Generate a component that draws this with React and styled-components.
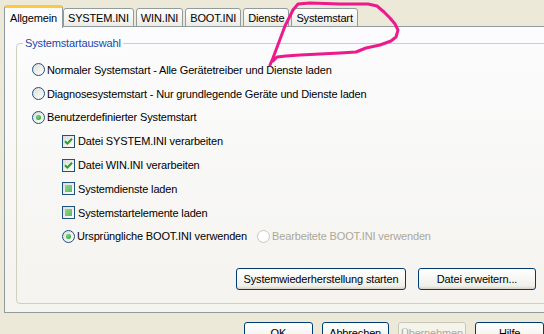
import styled, { createGlobalStyle } from "styled-components";

const GlobalStyle = createGlobalStyle`
    html, body {
        margin: 0;
        padding: 0;
        background: #ece9d8;
    }
    body {
        font-family: "Liberation Sans", Arial, sans-serif;
        font-size: 11px;
        letter-spacing: -0.15px;
        color: #000;
    }
`;

const tabs = ["Allgemein", "SYSTEM.INI", "WIN.INI", "BOOT.INI", "Dienste", "Systemstart"];

function Radio({ checked, disabled, children }) {
    return (
        <Option disabled={disabled}>
            <RadioCircle disabled={disabled}>{checked && <RadioDot />}</RadioCircle>
            {children}
        </Option>
    );
}

function Check({ state, children }) {
    return (
        <Option>
            <CheckBox>
                {state === "checked" && (
                    <svg width="9" height="9" viewBox="0 0 9 9">
                        <path d="M1 4.2 L3.4 6.6 L8 1.8" stroke="#21a121" strokeWidth="2" fill="none" />
                    </svg>
                )}
                {state === "mixed" && <MixedFill />}
            </CheckBox>
            {children}
        </Option>
    );
}

function App() {
    return (
        <Window>
            <GlobalStyle />
            <TabStrip>
                {tabs.map((t, i) => (
                    <Tab key={t} active={i === 0}>{t}</Tab>
                ))}
            </TabStrip>
            <Panel>
                <GroupBox>
                    <Legend>Systemstartauswahl</Legend>
                    <Radio>Normaler Systemstart - Alle Gerätetreiber und Dienste laden</Radio>
                    <Radio>Diagnosesystemstart - Nur grundlegende Geräte und Dienste laden</Radio>
                    <Radio checked>Benutzerdefinierter Systemstart</Radio>
                    <SubOptions>
                        <Check state="checked">Datei SYSTEM.INI verarbeiten</Check>
                        <Check state="checked">Datei WIN.INI verarbeiten</Check>
                        <Check state="mixed">Systemdienste laden</Check>
                        <Check state="mixed">Systemstartelemente laden</Check>
                        <BootRow>
                            <Radio checked>Ursprüngliche BOOT.INI verwenden</Radio>
                            <Radio disabled>Bearbeitete BOOT.INI verwenden</Radio>
                        </BootRow>
                    </SubOptions>
                    <ActionRow>
                        <Button width={170}>Systemwiederherstellung starten</Button>
                        <Button width={118}>Datei erweitern...</Button>
                    </ActionRow>
                </GroupBox>
            </Panel>
            <Footer>
                <Button width={74}>OK</Button>
                <Button width={72}>Abbrechen</Button>
                <Button width={74} disabled>Übernehmen</Button>
                <Button width={74}>Hilfe</Button>
            </Footer>
            <Scribble width="544" height="80" viewBox="0 0 544 80">
                <path
                    d="M270 65 L273 58 L276 50 L279 42 L282 34 L285 26 L289 18 L293 10 L298 4 L310 3 L340 4 L368 4 L377 6 L384 12 L390 18 L395 24 L398 30 L396 37 L391 41 L380 45 L366 48 L356 52 L340 53 L320 54 L300 55 L286 56 L277 57 L273 61"
                    stroke="#ec1a8c"
                    strokeWidth="3"
                    fill="none"
                    strokeLinejoin="round"
                    strokeLinecap="round"
                />
            </Scribble>
        </Window>
    );
}

export default App;

const Window = styled.div`
    position: relative;
    width: 544px;
    height: 334px;
    overflow: hidden;
    background: #ece9d8;
`;

const TabStrip = styled.div`
    display: flex;
    align-items: flex-end;
    height: 27px;
    padding-left: 4px;
    position: relative;
    z-index: 1;
    margin-bottom: -1px;
`;

const Tab = styled.div`
    box-sizing: border-box;
    height: ${p => (p.active ? 23 : 19)}px;
    padding: ${p => (p.active ? "3px 5px 0 5px" : "2px 4px 0 4px")};
    margin-right: ${p => (p.active ? 0 : 2)}px;
    margin-bottom: ${p => (p.active ? -1 : 0)}px;
    border: 1px solid #919b9c;
    border-bottom: ${p => (p.active ? "none" : "1px solid #919b9c")};
    border-top: ${p => (p.active ? "3px solid #ffc83c" : "1px solid #919b9c")};
    border-radius: 3px 3px 0 0;
    background: ${p => (p.active ? "#fcfcfe" : "linear-gradient(#ffffff, #ecebe6)")};
    white-space: nowrap;
    line-height: 14px;
`;

const Panel = styled.div`
    box-sizing: border-box;
    width: 560px;
    height: 287px;
    margin-left: 4px;
    border: 1px solid #919b9c;
    border-right: none;
    background: linear-gradient(#fcfcfe, #f4f3ee);
    padding: 16px 0 0 11px;
`;

const GroupBox = styled.div`
    position: relative;
    box-sizing: border-box;
    height: 261px;
    border: 1px solid #d0d0bf;
    border-radius: 4px;
    padding: 14px 0 0 15px;
    display: flex;
    flex-direction: column;
`;

const Legend = styled.span`
    position: absolute;
    top: -7px;
    left: 6px;
    padding: 0 2px;
    background: #fcfcfe;
    color: #1d45a8;
    line-height: 13px;
`;

const Option = styled.div`
    display: flex;
    align-items: center;
    height: 23.8px;
    gap: 2px;
    white-space: nowrap;
    color: ${p => (p.disabled ? "#aca899" : "#000")};
`;

const RadioCircle = styled.span`
    box-sizing: border-box;
    width: 13px;
    height: 13px;
    border-radius: 50%;
    border: 1px solid ${p => (p.disabled ? "#cac8bb" : "#1c5180")};
    background: ${p => (p.disabled ? "#fff" : "linear-gradient(135deg, #dcdcd7, #ffffff)")};
    display: flex;
    align-items: center;
    justify-content: center;
`;

const RadioDot = styled.span`
    width: 5px;
    height: 5px;
    border-radius: 50%;
    background: radial-gradient(circle at 40% 35%, #7bd37b, #21a121);
`;

const CheckBox = styled.span`
    box-sizing: border-box;
    width: 13px;
    height: 13px;
    border: 1px solid #1c5180;
    background: linear-gradient(135deg, #dcdcd7, #ffffff);
    display: flex;
    align-items: center;
    justify-content: center;
    margin-right: 1px;
`;

const MixedFill = styled.span`
    width: 7px;
    height: 7px;
    background: linear-gradient(135deg, #8fd48f, #5fbb5f);
`;

const SubOptions = styled.div`
    display: flex;
    flex-direction: column;
    padding-left: 30px;
`;

const BootRow = styled.div`
    display: flex;
    gap: 10px;
`;

const ActionRow = styled.div`
    display: flex;
    gap: 12px;
    padding-left: 204px;
    margin-top: 20px;
`;

const Button = styled.button`
    box-sizing: border-box;
    width: ${p => p.width}px;
    height: 22px;
    padding: 0;
    border: 1px solid ${p => (p.disabled ? "#c9c7ba" : "#003c74")};
    border-radius: 3px;
    background: ${p => (p.disabled ? "#f5f4ea" : "linear-gradient(#ffffff, #f0f0ea 85%, #d6d0c5)")};
    color: ${p => (p.disabled ? "#aca899" : "#000")};
    font-family: inherit;
    font-size: 11px;
    letter-spacing: -0.15px;
    white-space: nowrap;
`;

const Footer = styled.div`
    display: flex;
    gap: 9px;
    padding: 9px 0 0 244px;
`;

const Scribble = styled.svg`
    position: absolute;
    left: 0;
    top: 0;
    pointer-events: none;
    z-index: 2;
`;
